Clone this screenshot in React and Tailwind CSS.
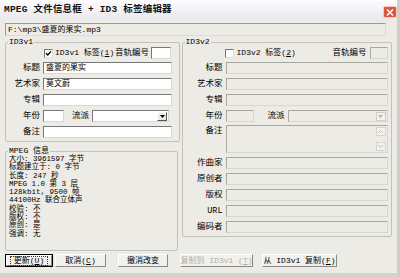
import React from 'react';

const BG = 'bg-[#ecebe6]';

const Field = ({ w, disabled, h = 'h-[12px]', children }) => (
  <div
    className={`${w} ${h} shrink-0 border border-t-[#777] border-l-[#777] border-r-[#d8d8d2] border-b-[#d8d8d2] ${
      disabled ? 'bg-[#ecebe6] border-t-[#a9a8a0] border-l-[#a9a8a0]' : 'bg-white'
    } pl-[2px] text-[8px] leading-[10px] text-black whitespace-nowrap overflow-hidden`}
  >
    {children}
  </div>
);

const Select = ({ w, disabled }) => (
  <div
    className={`${w} h-[12px] shrink-0 flex justify-end items-center pr-[1px] border border-t-[#777] border-l-[#777] border-r-[#d8d8d2] border-b-[#d8d8d2] ${
      disabled ? 'bg-[#ecebe6] border-t-[#a9a8a0] border-l-[#a9a8a0]' : 'bg-white'
    }`}
  >
    <div
      className={`w-[10px] h-[9px] flex items-center justify-center border ${
        disabled ? 'border-[#d0cfc8] bg-[#f2f1ed]' : 'border-t-white border-l-white border-r-[#555] border-b-[#555] bg-[#ecebe6]'
      }`}
    >
      <svg width="5" height="3" viewBox="0 0 5 3">
        <path d="M0 0h5L2.5 3z" fill={disabled ? '#b5b4ac' : '#000'} />
      </svg>
    </div>
  </div>
);

const Check = ({ checked }) => (
  <div className="w-[9px] h-[9px] shrink-0 border border-t-[#777] border-l-[#777] border-r-[#ddd] border-b-[#ddd] bg-white flex items-center justify-center">
    {checked && (
      <svg width="7" height="7" viewBox="0 0 7 7">
        <path d="M1 3.2l1.8 1.8L6 1.4" stroke="#000" strokeWidth="1.4" fill="none" />
      </svg>
    )}
  </div>
);

const Group = ({ title, className, children }) => (
  <div className={`relative border border-[#c2c1ba] rounded-[2px] ${className}`}>
    <span className={`absolute -top-[5px] left-[2px] px-[1px] ${BG} text-[8px] leading-[8px] text-black`}>
      {title}
    </span>
    {children}
  </div>
);

const Row = ({ label, lw, children, top = 'items-center' }) => (
  <div className={`flex ${top} gap-[3px]`}>
    <span className={`${lw} shrink-0 text-right text-[8.5px] leading-[12px] text-black whitespace-nowrap`}>{label}</span>
    {children}
  </div>
);

const Btn = ({ w, children, disabled, def }) => (
  <div
    className={`${w} h-[13px] shrink-0 flex items-center justify-center text-[8px] leading-none whitespace-nowrap ${
      def ? 'border border-black' : ''
    }`}
  >
    <div
      className={`w-full h-full flex items-center justify-center bg-[#f1f0ec] border border-t-white border-l-white border-r-[#8a8a84] border-b-[#8a8a84] ${
        disabled ? 'text-[#b0afa6]' : 'text-black'
      }`}
    >
      <span className={def ? 'outline outline-1 outline-dotted outline-[#333] px-[3px]' : ''}>{children}</span>
    </div>
  </div>
);

const mpeg = [
  '大小: 3961597 字节',
  '标题建立于: 0 字节',
  '长度: 247 秒',
  'MPEG 1.0 第 3 层',
  '128kbit, 9500 帧',
  '44100Hz 联合立体声',
  '校验: 不',
  '版权: 不',
  '原创: 是',
  '强调: 无',
];

export default function App() {
  return (
    <div
      className={`w-[400px] h-[277px] ${BG} overflow-hidden flex flex-col border-r-[3px] border-b-[4px] border-r-[#cfcec8] border-b-[#d2d1cb] font-['Liberation_Mono','Noto_Sans_CJK_SC',monospace]`}
    >
      {/* Title bar */}
      <div className="h-[19px] shrink-0 flex items-start justify-between pl-[4px] bg-linear-to-b from-[#fdfdfe] to-[#e9e9ee]">
        <span className="mt-[4px] text-[9.5px] leading-[11px] font-bold text-[#111] tracking-[0.2px]">
          MPEG 文件信息框 + ID3 标签编辑器
        </span>
        <div className="mt-[6px] w-[14px] h-[12px] rounded-[2px] bg-[#d9583f] border border-[#f3c9be] flex items-center justify-center">
          <svg width="8" height="7" viewBox="0 0 8 7">
            <path d="M1 0.5l6 6M7 0.5l-6 6" stroke="#fff" strokeWidth="1.5" />
          </svg>
        </div>
      </div>

      <div className="px-[5px] flex flex-col">
        {/* Path */}
        <div className="mt-[4px] w-[381px] h-[13px] border border-t-[#9a9992] border-l-[#9a9992] border-r-[#dcdbd5] border-b-[#dcdbd5] bg-[#ecebe6] pl-[2px] text-[8px] leading-[11px] text-black">
          F:\mp3\盛夏的果实.mp3
        </div>

        {/* Columns */}
        <div className="mt-[6px] flex">
          <div className="w-[177px] flex flex-col">
            <Group title="ID3v1" className="w-[175px] h-[100px] pt-[4px] flex flex-col">
              <div className="flex items-center h-[12px]">
                <div className="ml-[38px]">
                  <Check checked />
                </div>
                <span className="ml-[2px] w-[60px] text-[8px] leading-[12px] whitespace-nowrap">
                  ID3v1 标签(<span className="underline">1</span>)
                </span>
                <span className="text-[8.5px] leading-[12px] whitespace-nowrap">音轨编号</span>
                <div className="ml-[2px]">
                  <Field w="w-[20px]" />
                </div>
              </div>
              <div className="mt-[3px] flex flex-col gap-[4px]">
                <Row label="标题" lw="w-[34px]">
                  <Field w="w-[129px]">盛夏的果实</Field>
                </Row>
                <Row label="艺术家" lw="w-[34px]">
                  <Field w="w-[129px]">莫文蔚</Field>
                </Row>
                <Row label="专辑" lw="w-[34px]">
                  <Field w="w-[129px]" />
                </Row>
                <Row label="年份" lw="w-[34px]">
                  <Field w="w-[21px]" />
                  <span className="ml-[5px] text-[8.5px] leading-[12px]">流派</span>
                  <Select w="w-[77px]" />
                </Row>
                <Row label="备注" lw="w-[34px]">
                  <Field w="w-[129px]" />
                </Row>
              </div>
            </Group>

            <Group title="MPEG 信息" className="mt-[9px] w-[173px] h-[100px] pt-[3px] pl-[3px]">
              {mpeg.map((line) => (
                <div key={line} className="text-[7.5px] leading-[8.3px] text-black whitespace-nowrap">
                  {line}
                </div>
              ))}
            </Group>
          </div>

          <Group title="ID3v2" className="w-[211px] h-[195px] pt-[4px] flex flex-col">
            <div className="flex items-center h-[12px]">
              <div className="ml-[42px]">
                <Check />
              </div>
              <span className="ml-[3px] w-[96px] text-[8px] leading-[12px] whitespace-nowrap">
                ID3v2 标签(<span className="underline">2</span>)
              </span>
              <span className="text-[8.5px] leading-[12px] whitespace-nowrap">音轨编号</span>
              <div className="ml-[3px]">
                <Field w="w-[18px]" disabled />
              </div>
            </div>
            <div className="mt-[3px] flex flex-col gap-[4px]">
              <Row label="标题" lw="w-[40px]">
                <Field w="w-[162px]" disabled />
              </Row>
              <Row label="艺术家" lw="w-[40px]">
                <Field w="w-[162px]" disabled />
              </Row>
              <Row label="专辑" lw="w-[40px]">
                <Field w="w-[162px]" disabled />
              </Row>
              <Row label="年份" lw="w-[40px]">
                <Field w="w-[28px]" disabled />
                <span className="ml-[11px] text-[8.5px] leading-[12px]">流派</span>
                <Select w="w-[100px]" disabled />
              </Row>
            </div>
            <div className="mt-[3px]">
              <Row label="备注" lw="w-[40px]" top="items-start">
                <div className="w-[162px] h-[28px] shrink-0 flex justify-end border border-t-[#a9a8a0] border-l-[#a9a8a0] border-r-[#d8d8d2] border-b-[#d8d8d2] bg-[#ecebe6]">
                  <div className="w-[11px] flex flex-col justify-between py-[1px] pr-[1px]">
                    <div className="h-[9px] border border-[#d6d5cd] bg-[#f2f1ed] flex items-center justify-center">
                      <svg width="5" height="3" viewBox="0 0 5 3">
                        <path d="M0 3L2.5 0.5 5 3" stroke="#c0bfb6" fill="none" />
                      </svg>
                    </div>
                    <div className="h-[9px] border border-[#d6d5cd] bg-[#f2f1ed] flex items-center justify-center">
                      <svg width="5" height="3" viewBox="0 0 5 3">
                        <path d="M0 0L2.5 2.5 5 0" stroke="#c0bfb6" fill="none" />
                      </svg>
                    </div>
                  </div>
                </div>
              </Row>
            </div>
            <div className="mt-[4px] flex flex-col gap-[4px]">
              <Row label="作曲家" lw="w-[40px]">
                <Field w="w-[162px]" disabled />
              </Row>
              <Row label="原创者" lw="w-[40px]">
                <Field w="w-[162px]" disabled />
              </Row>
              <Row label="版权" lw="w-[40px]">
                <Field w="w-[162px]" disabled />
              </Row>
              <Row label="URL" lw="w-[40px]">
                <Field w="w-[162px]" disabled />
              </Row>
              <Row label="编码者" lw="w-[40px]">
                <Field w="w-[162px]" disabled />
              </Row>
            </div>
          </Group>
        </div>

        {/* Buttons */}
        <div className="mt-[3px] flex items-center">
          <Btn w="w-[48px]" def>
            更新(<span className="underline">U</span>)
          </Btn>
          <div className="ml-[2px]">
            <Btn w="w-[51px]">
              取消(<span className="underline">C</span>)
            </Btn>
          </div>
          <div className="ml-[12px]">
            <Btn w="w-[50px]">撤消改变</Btn>
          </div>
          <div className="ml-[12px]">
            <Btn w="w-[73px]" disabled>
              复制到 ID3v1 (<span className="underline">T</span>)
            </Btn>
          </div>
          <div className="ml-[9px]">
            <Btn w="w-[75px]">
              从 ID3v1 复制(<span className="underline">F</span>)
            </Btn>
          </div>
        </div>
      </div>
    </div>
  );
}
